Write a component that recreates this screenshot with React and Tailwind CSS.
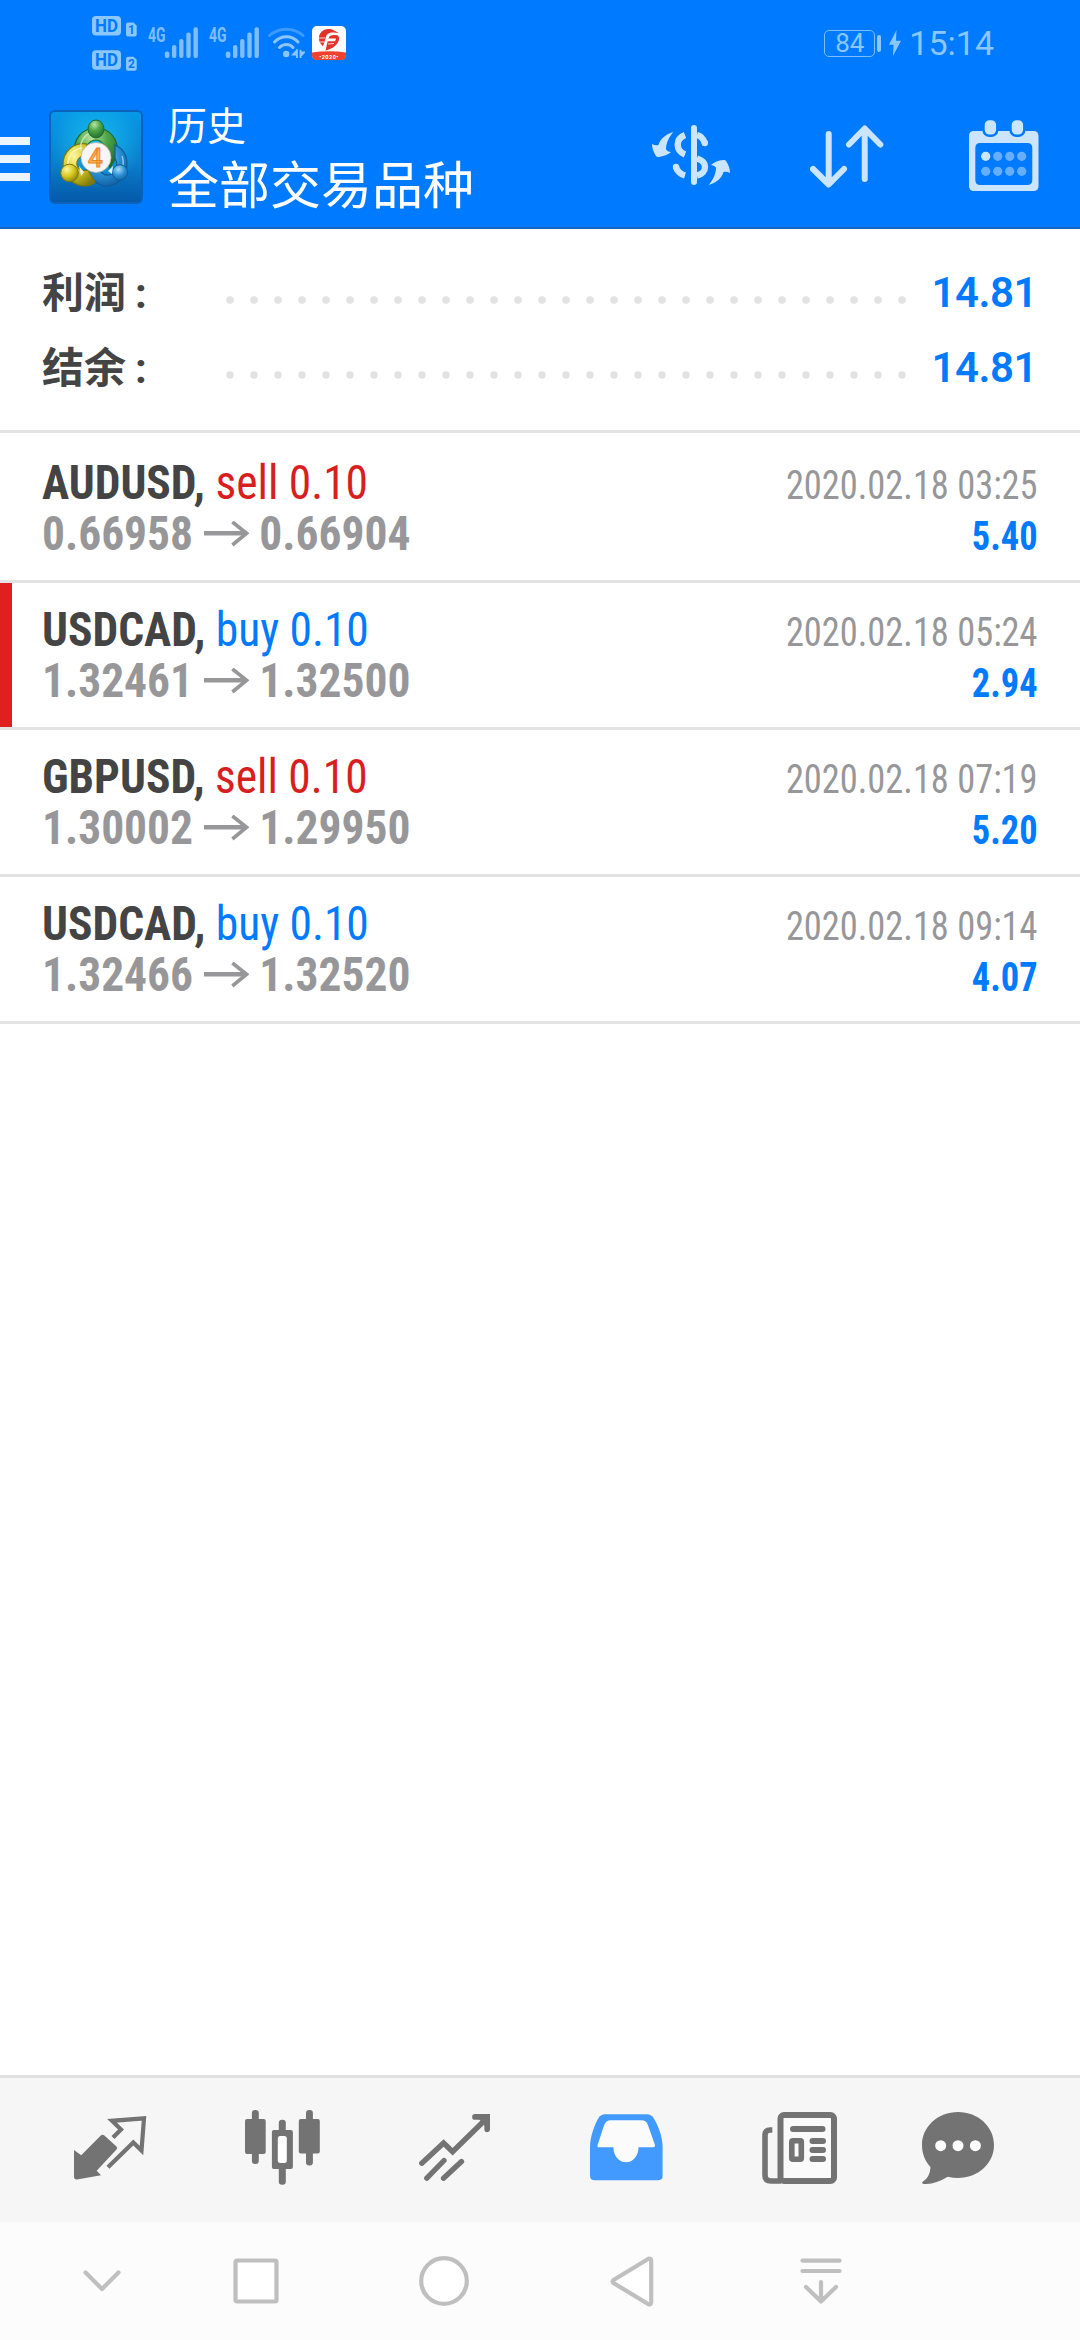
import React from 'react';

const operaciones = [
  { id: 1, simbolo: 'AUDUSD', tipo: 'sell', volumen: '0.10', apertura: '0.66958', cierre: '0.66904', fecha: '2020.02.18 03:25', beneficio: '5.40' },
  { id: 2, simbolo: 'USDCAD', tipo: 'buy', volumen: '0.10', apertura: '1.32461', cierre: '1.32500', fecha: '2020.02.18 05:24', beneficio: '2.94', marcada: true },
  { id: 3, simbolo: 'GBPUSD', tipo: 'sell', volumen: '0.10', apertura: '1.30002', cierre: '1.29950', fecha: '2020.02.18 07:19', beneficio: '5.20' },
  { id: 4, simbolo: 'USDCAD', tipo: 'buy', volumen: '0.10', apertura: '1.32466', cierre: '1.32520', fecha: '2020.02.18 09:14', beneficio: '4.07' },
];

const resumen = [
  { etiqueta: '利润', valor: '14.81' },
  { etiqueta: '结余', valor: '14.81' },
];

const IconoHD = () => (
  <svg width="45" height="56" viewBox="0 0 45 56" className="overflow-visible text-[#8cc6ff]">
    {[0, 34.3].map((y, i) => (
      <g key={y} transform={`translate(0 ${y})`}>
        <rect x="0" y="1" width="29" height="19.5" rx="4" fill="currentColor" />
        <text x="14.5" y="17" textAnchor="middle" textLength="23" lengthAdjust="spacingAndGlyphs" fontFamily="Roboto" fontWeight="700" fontSize="18" fill="#007aff">HD</text>
        <path d="M34 9.500q0-2 2-2h5.500l3.200 3v9q0 2-2 2h-6.700q-2 0-2-2z" fill="currentColor" />
        <text x="39.500" y="19" textAnchor="middle" fontFamily="Roboto" fontWeight="700" fontSize="12" fill="#007aff">{i + 1}</text>
      </g>
    ))}
  </svg>
);

const IconoSenal = () => (
  <svg width="50" height="31" viewBox="0 0 50 31" className="overflow-visible text-[#7dbeff]">
    <text x="0" y="14.500" textLength="17.500" lengthAdjust="spacingAndGlyphs" fontFamily="Roboto" fontWeight="700" fontSize="20" fill="currentColor">4G</text>
    <rect x="16.800" y="24.500" width="4.600" height="6.500" rx="2" fill="currentColor" />
    <rect x="24" y="18" width="4.400" height="13" rx="2" fill="currentColor" />
    <rect x="31.100" y="12" width="4.400" height="19" rx="2" fill="currentColor" />
    <rect x="38.300" y="5.500" width="4.400" height="25.500" rx="2" fill="currentColor" />
    <rect x="45.500" y="0.300" width="4.400" height="30.700" rx="2" fill="currentColor" />
  </svg>
);

const IconoWifi = () => (
  <svg width="37" height="31" viewBox="0 0 37 31" fill="none" strokeLinecap="round">
    <path d="M1.500 8.500C11 0 25.500 0 35 8.500" stroke="#3d9bff" strokeWidth="3" />
    <path d="M6.500 15C13 8 24 8 30 15" stroke="#8cc6ff" strokeWidth="3" />
    <path d="M11.500 20.500C15 16.500 22 16.500 25 20.500" stroke="#8cc6ff" strokeWidth="3" />
    <circle cx="18.200" cy="27" r="3.200" fill="#8cc6ff" />
    <path d="M29 23v7.500M29 23.500l-4 4h4M32.500 30.500V23.500M32.500 29l3.500-3.500h-3.500" stroke="#8cc6ff" strokeWidth="1.800" />
  </svg>
);

const IconoApp = () => (
  <svg width="34" height="34" viewBox="0 0 34 34">
    <rect width="34" height="34" rx="5" fill="#fff" />
    <path d="M0 26.500Q17 24 34 26.500V29q0 5-5 5H5q-5 0-5-5z" fill="#f0402e" />
    <path d="M20 3.500C12 1.500 6.500 6.500 7 13c.2 3 1.800 5.500 4 7.200L13.500 12.500C14.500 7 18 5.500 27 7z" fill="#e2322a" />
    <path d="M26 9.500c-5-1-8.500-.5-9.500 3h7.500l-.8 2.800h-7.500L13.500 24.500C19 23.500 27 19 27.200 12z" fill="#e2322a" />
    <path d="M7 12h6M8 16h4M16 18l6-.5" stroke="#fff" strokeWidth="0.800" />
    <text x="17" y="32.500" textAnchor="middle" fontFamily="Roboto" fontSize="5.500" fontWeight="700" fill="#fff" letterSpacing="0.500">•2020•</text>
  </svg>
);

const IconoRayo = () => (
  <svg width="12" height="26" viewBox="0 0 12 26">
    <path d="M7.500 0L0 14.800h4.500L4 26l8-15.200H7z" fill="#8cc6ff" />
  </svg>
);

const LogoMT = () => (
  <svg width="94" height="94" viewBox="0 0 94 94">
    <defs>
      <linearGradient id="fondo" x1="0" y1="0" x2="0" y2="1">
        <stop offset="0" stopColor="#0798e8" />
        <stop offset="0.550" stopColor="#0a80cc" />
        <stop offset="1" stopColor="#0458a8" />
      </linearGradient>
      <radialGradient id="brillo" cx="0.500" cy="0.350" r="0.500">
        <stop offset="0" stopColor="#1cc8f0" stopOpacity="0.800" />
        <stop offset="1" stopColor="#1cc8f0" stopOpacity="0" />
      </radialGradient>
      <radialGradient id="verde" cx="0.400" cy="0.250" r="0.800">
        <stop offset="0" stopColor="#b9e6a0" />
        <stop offset="0.450" stopColor="#4fa548" />
        <stop offset="1" stopColor="#1d6a2a" />
      </radialGradient>
      <radialGradient id="amarillo" cx="0.350" cy="0.300" r="0.800">
        <stop offset="0" stopColor="#fdf6a0" />
        <stop offset="0.500" stopColor="#d8c81e" />
        <stop offset="1" stopColor="#7d7a10" />
      </radialGradient>
      <radialGradient id="azul" cx="0.400" cy="0.300" r="0.800">
        <stop offset="0" stopColor="#a6dcf8" />
        <stop offset="0.500" stopColor="#2b92d6" />
        <stop offset="1" stopColor="#0c5596" />
      </radialGradient>
    </defs>
    <rect x="1" y="1" width="92" height="92" rx="5" fill="url(#fondo)" stroke="#0b62bd" strokeWidth="2" />
    <rect x="2" y="2" width="90" height="90" rx="4" fill="url(#brillo)" />
    <path d="M26 44C23 30 33 18 47 18s24 12 21 28L61 58l-6-14c2-8-2-14-8-14s-10 5-9 12z" fill="url(#verde)" stroke="#1f6b2c" strokeWidth="1.200" />
    <path d="M66 35c10 4 14 14 11 26C74 72 60 80 50 74c-6-3-11-9-13-14l12-2c3 6 9 9 14 6 5-4 6-11 3-16z" fill="url(#azul)" stroke="#0e5d9e" strokeWidth="1.200" />
    <path d="M38 34C24 32 14 42 14 54c0 12 10 22 22 22 4 0 9-2 10-4L39 60c-7 2-12-2-11-8 1-4 4-6 8-7z" fill="url(#amarillo)" stroke="#77760f" strokeWidth="1.200" />
    <path d="M32 41c-2-10 5-19 15-19" stroke="#d5f0bd" strokeWidth="1.500" fill="none" opacity="0.800" />
    <path d="M19 54c0-9 6-15 14-16" stroke="#fffbc0" strokeWidth="1.500" fill="none" opacity="0.800" />
    <path d="M73 46c3 8 0 17-6 21" stroke="#b5e2fa" strokeWidth="1.500" fill="none" opacity="0.700" />
    <ellipse cx="47" cy="19" rx="8" ry="9" fill="url(#verde)" stroke="#1f6b2c" />
    <circle cx="20.500" cy="63" r="8.800" fill="url(#amarillo)" stroke="#77760f" />
    <circle cx="71" cy="62.500" r="7.800" fill="url(#azul)" stroke="#0e5d9e" />
    <path d="M30 56l5 6-3 4z" fill="#eef2d8" />
    <path d="M64 56l-5 5 4 3z" fill="#e2f0fa" />
    <circle cx="47" cy="47.500" r="15" fill="#f7f5f6" stroke="#b5b5a8" strokeWidth="0.800" />
    <text x="46.500" y="56.500" textAnchor="middle" fontFamily="Roboto" fontWeight="500" fontSize="26" fill="#f9b45a" stroke="#ee8420" strokeWidth="0.900">4</text>
  </svg>
);

const IconoDolar = () => (
  <svg width="78" height="60" viewBox="0 0 78 60" fill="none" stroke="#cce5ff" strokeWidth="6.400">
    <path d="M42 3v54" strokeLinecap="round" strokeWidth="6" />
    <path d="M33 10C28 12 25.700 15.500 25.700 19.500S28 27.500 33 29.500" />
    <path d="M33 50.500C28 49 25 46 24 42" />
    <circle cx="24" cy="42" r="3.200" fill="#cce5ff" stroke="none" />
    <path d="M45 10C49 11 51.500 14 52.800 18" />
    <circle cx="52.800" cy="18" r="3.200" fill="#cce5ff" stroke="none" />
    <path d="M45 33.500C50 35 53 38 53 42s-3 7.500-8 8.500" />
    <g fill="#cce5ff" stroke="none">
      <path d="M21.300 7C14 9 8 14 6.500 20q-3 1-6.500-1 0 6 4 12 .7 1.200 3 .9Q14 31.300 19 27q-3 0-5-2.500C14 18 17 12 21.300 7z" />
      <path transform="translate(78 67) rotate(180)" d="M21.300 7C14 9 8 14 6.500 20q-3 1-6.500-1 0 6 4 12 .7 1.200 3 .9Q14 31.300 19 27q-3 0-5-2.500C14 18 17 12 21.300 7z" />
    </g>
  </svg>
);

const IconoOrden = () => (
  <svg width="74" height="64" viewBox="0 0 74 64" fill="none" stroke="#cce5ff" strokeWidth="6" strokeLinecap="round" strokeLinejoin="round">
    <path d="M18.700 9v50M3 44l15.700 15.500L34 44" />
    <path d="M54.700 54V4M39 19.500L54.700 3.500l15.600 16" />
  </svg>
);

const IconoCalendario = () => (
  <svg width="70" height="71" viewBox="0 0 70 71">
    <path fillRule="evenodd" fill="#cce5ff" d="M5 11h59.500q5 0 5 5v50q0 5-5 5H5q-5 0-5-5V16q0-5 5-5zM11.300 23q-5 0-5 5v32q0 5 5 5h47q5 0 5-5V28q0-5-5-5z" />
    {[15.500, 42.500].map(x => (
      <rect key={x} x={x - 1} y="-1" width="13.800" height="16.800" rx="6" fill="#cce5ff" stroke="#007aff" strokeWidth="2.400" />
    ))}
    {[16.700, 28.700, 40.700, 52.700].map((x, i) => (
      <g key={x} fill="#66afff">
        <circle cx={x} cy="36.300" r="4.600" fill={i === 0 ? '#cce5ff' : '#66afff'} />
        <circle cx={x} cy="51.300" r="4.600" />
      </g>
    ))}
  </svg>
);

const IconoCotizaciones = () => (
  <svg width="73" height="64" viewBox="0 0 73 64">
    <path d="M0 34l7.200 5.300L26.800 19.500q1.800-1.600 3.600 0L42.500 30.500q1.500 1.500 0 3L22.700 54.700l4.300 4.600L3 63.400Q0 63.600 0 60.500z" fill="#737373" />
    <path d="M39 21.500l8-8-9-8.700L70 2.400 67.500 34.500 59.300 26.500 34 51.300" fill="none" stroke="#737373" strokeWidth="4.200" />
  </svg>
);

const IconoVelas = () => (
  <svg width="75" height="75" viewBox="0 0 75 75" fill="#737373">
    <rect x="6.900" y="0" width="6.900" height="54" rx="3.200" />
    <rect x="0" y="9" width="20.700" height="35" rx="2" />
    <rect x="33.800" y="9.700" width="7" height="65" rx="3.200" />
    <rect x="26.900" y="20" width="21" height="39" rx="2" />
    <rect x="32.800" y="26" width="9" height="27" rx="2.500" fill="#fff" />
    <rect x="61" y="0" width="6.900" height="55.500" rx="3.200" />
    <rect x="53.800" y="9" width="21" height="34.500" rx="2" />
  </svg>
);

const IconoTendencia = () => (
  <svg width="71" height="67" viewBox="0 0 71 67" fill="none" stroke="#737373" strokeWidth="5.300" strokeLinecap="round">
    <path d="M2.800 49.300L24.600 29l9 8.700L67 5" strokeLinecap="round" />
    <path d="M56 2.900h12.200v12.400" strokeWidth="5.700" />
    <path d="M58 3h11v12z" fill="#737373" stroke="none" />
    <path d="M25 46.500L7.800 64.200M42.500 47.500L24.500 64.200" />
  </svg>
);

const IconoBandeja = () => (
  <svg width="73" height="67" viewBox="0 0 73 67">
    <path d="M0 62V33C0 22 5 10 8.500 4Q11 .3 15 .3h42q4 0 6.500 3.700C67.500 10 72.600 22 72.600 33v29q0 4.300-5 4.300H5Q0 66.300 0 62z" fill="#429aff" />
    <path d="M7.600 31L14 11.500Q16 6.300 20.500 6.300h31.300q4.500 0 6 4.500L65 31q.4 2.300-1.800 2.300H48.500C48.500 42 43 48.300 36 48.300S23.400 42 23.400 33.300H9.200Q7 33.300 7.600 31z" fill="#fbfbfb" />
  </svg>
);

const IconoNoticias = () => (
  <svg width="75" height="72" viewBox="0 0 75 72" fill="none" stroke="#737373" strokeWidth="6">
    <rect x="21" y="5" width="49" height="62" rx="4" fill="#fafafa" stroke="none" />
    <rect x="18.500" y="3" width="53.500" height="66" rx="3.500" />
    <path d="M10.300 18H8q-5 0-5 5v40q0 6 6 6h10" strokeWidth="5.600" />
    <path d="M31 17h29.500M50.500 29h10.500M50.500 38h10.500M50.500 47h10.500" strokeLinecap="round" />
    <rect x="29.800" y="28.800" width="9.500" height="18.500" rx="1" strokeWidth="5.600" fill="#fafafa" />
  </svg>
);

const IconoMensajes = () => (
  <svg width="72" height="72" viewBox="0 0 72 72">
    <path d="M36 0c20 0 36 14.500 36 33S56 66 36 66q-5 0-10.200-1.300Q13 72.500 1.500 72-.5 71 .5 70 8 65.500 8.500 55C3 49 0 41.500 0 33 0 14.500 16 0 36 0z" fill="#737373" />
    {[18.700, 36, 53.400].map(x => <circle key={x} cx={x} cy="33.700" r="5.500" fill="#fff" />)}
  </svg>
);

const FlechaPrecio = () => (
  <svg width="48" height="26" viewBox="0 0 48 26" className="inline-block" fill="none" stroke="#97979a">
    <path d="M0 12.300h45" strokeWidth="4.400" />
    <path d="M30 1L45 12.300 30 24" strokeWidth="3.800" />
  </svg>
);

const BarraEstado = () => (
  <div className="flex h-[86px] items-start pl-[92px] pr-[86px]">
    <div className="pt-[15px]"><IconoHD /></div>
    <div className="ml-[11px] flex gap-[11px] pt-[27px]">
      <IconoSenal />
      <IconoSenal />
    </div>
    <div className="ml-[9px] pt-[27px]"><IconoWifi /></div>
    <div className="ml-[7px] pt-[26px]"><IconoApp /></div>
    <div className="ml-auto flex h-[86px] items-center text-[#8cc6ff]">
      <div className="flex h-[27px] w-[51px] items-center justify-center rounded-[5px] border border-[#7dbeff] text-[26px] leading-[27px]">84</div>
      <div className="ml-[2px] h-[17px] w-[4px] rounded-full bg-[#8cc6ff]" />
      <div className="ml-[8px]"><IconoRayo /></div>
      <span className="ml-[8px] text-[34px] leading-[40px]">15:14</span>
    </div>
  </div>
);

const Encabezado = () => (
  <header className="h-[229px] border-b-2 border-[#1565c0] bg-[#007aff]">
    <BarraEstado />
    <div className="flex h-[141px] items-center pr-[41px]">
      <div className="mt-[5px] flex w-[30px] flex-col gap-[10px]">
        <div className="h-2 bg-[#ebf5ff]" />
        <div className="h-2 bg-[#ebf5ff]" />
        <div className="h-2 bg-[#ebf5ff]" />
      </div>
      <div className="ml-[19px]"><LogoMT /></div>
      <div className="ml-[25px] flex flex-col pb-[4px] font-['Noto_Sans_CJK_SC',sans-serif] text-white">
        <span className="text-[39px] leading-[54px]">历史</span>
        <span className="text-[51px] leading-[64px]">全部交易品种</span>
      </div>
      <div className="mb-[3px] ml-auto"><IconoDolar /></div>
      <div className="ml-[80px]"><IconoOrden /></div>
      <div className="mb-[3px] ml-[85px]"><IconoCalendario /></div>
    </div>
  </header>
);

const Puntos = () => (
  <svg width="680" height="8" viewBox="0 0 680 8" fill="#e2e2e2">
    {Array.from({ length: 29 }, (_, i) => <circle key={i} cx={4 + i * 24} cy="4" r="3.800" />)}
  </svg>
);

const Resumen = () => (
  <section className="h-[204px] border-b-[3px] border-[#e3e3e3] pt-[25px] pl-[42px] pr-[43px]">
    {resumen.map(({ etiqueta, valor }) => (
      <div key={etiqueta} className="flex h-[75px] items-center font-bold">
        <span className="w-[184px] text-[42px] leading-[75px] text-[#444] font-['Noto_Sans_CJK_SC',sans-serif]">
          {etiqueta}<span className="ml-[9px] font-['Roboto']">:</span>
        </span>
        <div className="mt-[16px]"><Puntos /></div>
        <span className="ml-auto pt-[2px] text-[42px] leading-[73px] font-semibold tracking-[-0.5px] text-[#007aff]">{valor}</span>
      </div>
    ))}
  </section>
);

const Operacion = ({ op }) => (
  <li className="flex h-[147px] border-b-[3px] border-[#e3e3e3] font-['Roboto_Condensed','Roboto',sans-serif] font-stretch-condensed">
    <div className={op.marcada ? 'w-3 bg-[#e02020]' : 'w-3'} />
    <div className="flex flex-1 justify-between pl-[30px] pr-[42px]">
      <div className="origin-left scale-x-[0.947] pt-[21px] text-[48px] leading-[51px]">
        <div>
          <span className="font-bold text-[#444]">{op.simbolo},</span>{' '}
          <span className={op.tipo === 'sell' ? 'text-[#d81e1e]' : 'text-[#007aff]'}>{op.tipo} {op.volumen}</span>
        </div>
        <div className="flex items-center font-bold text-[#97979a]">
          <span>{op.apertura}</span>
          <span className="mx-[11px] flex"><FlechaPrecio /></span>
          <span>{op.cierre}</span>
        </div>
      </div>
      <div className="origin-right scale-x-[0.91] pt-[24px] text-right text-[40px] leading-[51px]">
        <div className="text-[#97979a]">{op.fecha}</div>
        <div className="font-bold text-[#007aff]">{op.beneficio}</div>
      </div>
    </div>
  </li>
);

const BarraPestanas = () => (
  <nav className="grid h-[147px] grid-cols-[172px_172px_172px_173px_173px_144px] items-center justify-items-center border-t-[3px] border-[#e0e0e0] bg-[#f6f6f6] pb-[5px] pl-6">
    <IconoCotizaciones />
    <IconoVelas />
    <IconoTendencia />
    <IconoBandeja />
    <IconoNoticias />
    <IconoMensajes />
  </nav>
);

const BarraSistema = () => (
  <div className="grid h-[118px] grid-cols-[156px_152px_224px_151px_228px] items-center justify-items-center bg-[#fcfcfc] pl-6">
    <svg width="38" height="22" viewBox="0 0 38 22" fill="none" stroke="#bfbfbf" strokeWidth="4.200" strokeLinecap="round" strokeLinejoin="round">
      <path d="M2.500 2.500L19 19 35.500 2.500" />
    </svg>
    <svg width="46" height="46" viewBox="0 0 46 46" fill="#fff" stroke="#bfbfbf" strokeWidth="4.200">
      <rect x="2.500" y="2.500" width="41" height="41" rx="1.500" />
    </svg>
    <svg width="50" height="50" viewBox="0 0 50 50" fill="#fff" stroke="#bfbfbf" strokeWidth="4.200">
      <circle cx="25" cy="25" r="22.800" />
    </svg>
    <svg width="44" height="51" viewBox="0 0 44 51" fill="#fff" stroke="#bfbfbf" strokeWidth="4.200" strokeLinejoin="round">
      <path d="M38.500 2.800L3.500 24Q2 25.500 3.500 27L38.500 48.200Q41.200 49 41.200 46V5Q41.200 2 38.500 2.800z" />
    </svg>
    <svg width="42" height="46" viewBox="0 0 42 46" fill="none" stroke="#bfbfbf" strokeWidth="4.200" strokeLinecap="round" strokeLinejoin="round">
      <path d="M2.500 2.700h37M2.500 13h37M21 24v19M6 29l15 14.500L36 29" />
    </svg>
  </div>
);

const App = () => {
  return (
    <div className="flex h-[2340px] w-[1080px] flex-col bg-white font-['Roboto','Noto_Sans_CJK_SC',sans-serif]">
      <Encabezado />
      <Resumen />
      <ul className="flex-1 pt-[3px]">
        {operaciones.map(op => <Operacion key={op.id} op={op} />)}
      </ul>
      <BarraPestanas />
      <BarraSistema />
    </div>
  );
};

export default App;
